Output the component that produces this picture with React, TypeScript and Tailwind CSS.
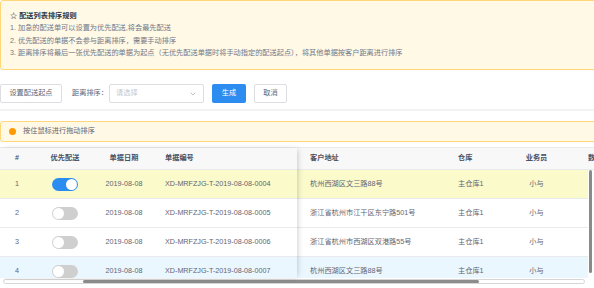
import React from "react";
import { ChevronDown } from "lucide-react";

const rows = [
  { n: 1, on: true, code: "XD-MRFZJG-T-2019-08-08-0004", addr: "杭州西湖区文三路88号", bg: "bg-[#fafacb]" },
  { n: 2, on: false, code: "XD-MRFZJG-T-2019-08-08-0005", addr: "浙江省杭州市江干区东宁路501号", bg: "bg-white" },
  { n: 3, on: false, code: "XD-MRFZJG-T-2019-08-08-0006", addr: "浙江省杭州市西湖区双港路55号", bg: "bg-white" },
  { n: 4, on: false, code: "XD-MRFZJG-T-2019-08-08-0007", addr: "杭州西湖区文三路88号", bg: "bg-[#ebf7ff]" },
];

function Toggle({ on }: { on: boolean }) {
  return (
    <div
      className={`w-[26px] h-[13px] rounded-full flex items-center px-[1px] ${
        on ? "bg-[#2d8cf0] justify-end" : "bg-[#cfcfcf] justify-start"
      }`}
    >
      <div className="w-[11px] h-[11px] rounded-full bg-white" />
    </div>
  );
}

export default function App() {
  return (
    <div className="w-[594px] h-[288px] overflow-hidden bg-white text-[7.2px] text-[#5f6573] font-['Liberation_Sans','Noto_Sans_CJK_SC',sans-serif]">
      {/* rules notice */}
      <div className="w-[640px] h-[70px] border border-[#ffd77a] bg-[#fff9e6] rounded-[3px] pl-[9px] pt-[9px]">
        <div className="leading-[12px] font-semibold text-[#2f3545]">☆ 配送列表排序规则</div>
        <div className="leading-[12.5px] text-[#737886]">1. 加急的配送单可以设置为优先配送,将会最先配送</div>
        <div className="leading-[12.5px] text-[#737886]">2. 优先配送的单据不会参与距离排序，需要手动排序</div>
        <div className="leading-[12.5px] text-[#737886] whitespace-nowrap">
          3. 距离排序将最后一张优先配送的单据为起点（无优先配送单据时将手动指定的配送起点），将其他单据按客户距离进行排序
        </div>
      </div>

      {/* toolbar */}
      <div className="mt-[14px] flex items-center h-[19px] whitespace-nowrap">
        <div className="w-[62px] h-[19px] border border-[#dcdee2] rounded-[2px] flex items-center justify-center">
          设置配送起点
        </div>
        <div className="ml-[10px] w-[35px]">距离排序：</div>
        <div className="ml-[2px] w-[95px] h-[19px] border border-[#dcdee2] rounded-[2px] flex items-center justify-between pl-[6px] pr-[6px]">
          <span className="text-[#c5c8ce]">请选择</span>
          <ChevronDown size={8} strokeWidth={1.6} className="text-[#808695]" />
        </div>
        <div className="ml-[8px] w-[34px] h-[19px] rounded-[2px] bg-[#2d8cf0] text-white flex items-center justify-center">
          生成
        </div>
        <div className="ml-[8px] w-[33px] h-[19px] border border-[#dcdee2] rounded-[2px] flex items-center justify-center">
          取消
        </div>
      </div>

      <div className="mt-[6px] h-[2px] bg-[#f3f3f3]" />

      {/* drag notice */}
      <div className="mt-[10px] w-[640px] h-[21px] border border-[#ffd77a] bg-[#fff9e6] rounded-[3px] flex items-center pl-[8px]">
        <div className="w-[7px] h-[7px] rounded-full bg-[#ff9900]" />
        <span className="ml-[7px]">按住鼠标进行拖动排序</span>
      </div>

      {/* table */}
      <div className="mt-[5px] border-t border-[#e8eaec] flex">
        {/* fixed left */}
        <div className="relative z-10 w-[297px] shrink-0 bg-white shadow-[2px_0_6px_-2px_rgba(0,0,0,0.25)]">
          <div className="h-[22px] bg-[#f8f8f9] border-b border-[#e8eaec] flex items-center font-semibold text-[#4a5060]">
            <div className="w-[34px] text-center">#</div>
            <div className="w-[62px] text-center">优先配送</div>
            <div className="w-[56px] text-center">单据日期</div>
            <div className="w-[145px] pl-[13px]">单据编号</div>
          </div>
          <div className="h-[108px] overflow-hidden">
            {rows.map((r) => (
              <div key={r.n} className={`h-[29px] border-b border-[#e8eaec] flex items-center ${r.bg}`}>
                <div className="w-[34px] text-center">{r.n}</div>
                <div className="w-[62px] flex justify-center">
                  <Toggle on={r.on} />
                </div>
                <div className="w-[56px] text-center">2019-08-08</div>
                <div className="w-[145px] pl-[13px] whitespace-nowrap">{r.code}</div>
              </div>
            ))}
          </div>
        </div>
        {/* scrolling right */}
        <div className="flex-1 min-w-0 overflow-hidden">
          <div className="h-[22px] bg-[#f8f8f9] border-b border-[#e8eaec] flex items-center font-semibold text-[#4a5060] whitespace-nowrap">
            <div className="w-[148px] shrink-0 pl-[13px]">客户地址</div>
            <div className="w-[58px] shrink-0 pl-[13px]">仓库</div>
            <div className="w-[67px] shrink-0 text-center">业务员</div>
            <div className="shrink-0 pl-[18px]">数量</div>
          </div>
          <div className="flex h-[108px]">
            <div className="w-[291px] shrink-0 overflow-hidden">
              {rows.map((r) => (
                <div key={r.n} className={`h-[29px] border-b border-[#e8eaec] flex items-center whitespace-nowrap ${r.bg}`}>
                  <div className="w-[148px] shrink-0 pl-[13px]">{r.addr}</div>
                  <div className="w-[58px] shrink-0 pl-[13px]">主仓库1</div>
                  <div className="w-[67px] shrink-0 text-center">小与</div>
                </div>
              ))}
            </div>
            <div className="w-[6px] shrink-0 pl-[1px]">
              <div className="w-[3px] h-[103px] rounded-full bg-[#8a8a8a]" />
            </div>
          </div>
        </div>
      </div>

      {/* horizontal scrollbar */}
      <div className="mt-[1px] ml-[3px] w-[582px] h-[5px] rounded-full border border-[#d6d6d6] bg-white flex overflow-hidden">
        <div className="w-[79px] shrink-0" />
        <div className="w-[396px] shrink-0 h-full rounded-full bg-[#8c8c8c]" />
      </div>
    </div>
  );
}
